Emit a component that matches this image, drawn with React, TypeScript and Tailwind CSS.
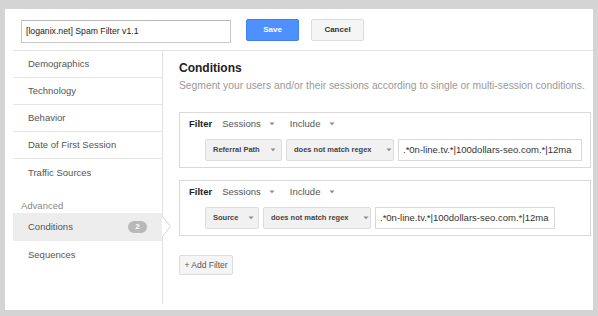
import React from "react";

const font = { fontFamily: '"Liberation Sans", Arial, sans-serif' };

function Caret() {
  return (
    <svg width="6" height="4" viewBox="0 0 6 4" className="shrink-0">
      <path d="M0.5 0.5 L5.5 0.5 L3 3.2 Z" fill="#8a8a8a" />
    </svg>
  );
}

function Pill({ label, w, pl, gap }: { label: string; w: string; pl: string; gap: string }) {
  return (
    <div
      className={`h-[22px] ${w} ${pl} ${gap} flex items-center bg-[#f1f1f1] border border-[#dcdcdc] rounded-[2px] text-[7.5px] font-bold text-[#444]`}
    >
      <span>{label}</span>
      <Caret />
    </div>
  );
}

function FilterBox({ first, inputW }: { first: React.ReactNode; inputW: string }) {
  return (
    <div className="border border-[#d9d9d9] pt-[4px] pb-[6px] pl-[9px]">
      <div className="h-[14px] flex items-center text-[9.5px] text-[#555]">
        <span className="font-bold text-[#222]">Filter</span>
        <span className="ml-[10px]">Sessions</span>
        <span className="ml-[8px]">
          <Caret />
        </span>
        <span className="ml-[15px]">Include</span>
        <span className="ml-[9px]">
          <Caret />
        </span>
      </div>
      <div className="mt-[8px] pl-[16px] flex gap-[4px]">
        {first}
        <Pill label="does not match regex" w="w-[108px]" pl="pl-[7px]" gap="gap-[14px]" />
        <div
          className={`h-[22px] ${inputW} border border-[#d9d9d9] pl-[4px] flex items-center text-[9.5px] text-[#333] whitespace-nowrap overflow-hidden`}
        >
          .*0n-line.tv.*|100dollars-seo.com.*|12ma
        </div>
      </div>
    </div>
  );
}

const navTop = ["Demographics", "Technology", "Behavior", "Date of First Session"];

export default function App() {
  return (
    <div
      style={font}
      className="w-[598px] h-[316px] bg-[#d4d4d4] pt-[9px] px-[5px] pb-[6px] overflow-hidden"
    >
      <div className="bg-white h-full overflow-hidden">
        <div className="h-[42px] ml-[8px] pl-[8px] border-b border-[#e2e2e2] flex items-start">
          <div className="mt-[11px] w-[210px] h-[23px] border border-[#c8c8c8] border-t-[#b9b9b9] pl-[4px] flex items-center text-[8.7px] text-[#222]">
            [loganix.net] Spam Filter v1.1
          </div>
          <button className="mt-[10px] ml-[15px] w-[53px] h-[22px] rounded-[2px] bg-[#4d90fe] border border-[#3c82f4] text-white text-[8px] font-bold">
            Save
          </button>
          <button className="mt-[10px] ml-[12px] w-[53px] h-[22px] rounded-[2px] bg-[#f5f5f5] border border-[#dcdcdc] text-[#333] text-[8px] font-bold">
            Cancel
          </button>
        </div>

        <div className="flex">
          <div className="ml-[8px] w-[150px] h-[253px] border-r border-[#e0e0e0] text-[9.5px] text-[#555]">
            {navTop.map((n) => (
              <div key={n} className="h-[27px] pt-[1px] border-b border-[#e6e6e6] pl-[15px] flex items-center">
                {n}
              </div>
            ))}
            <div className="h-[27px] pt-[1px] pl-[15px] flex items-center">Traffic Sources</div>
            <div className="mt-[14px] h-[13px] pl-[8px] flex items-center text-[#888]">Advanced</div>
            <div className="relative h-[28px] bg-[#ededed] pl-[15px] pr-[15px] flex items-center justify-between">
              <span>Conditions</span>
              <span className="w-[19px] h-[12px] rounded-full bg-[#b8b8b8] text-white text-[8px] font-bold flex items-center justify-center">
                2
              </span>
              <svg
                width="10"
                height="22"
                viewBox="0 0 10 22"
                className="absolute left-full top-[3px]"
              >
                <path d="M0 0 L8.5 10.5 L0 21 Z" fill="#fff" />
                <path d="M0 0 L8.5 10.5 L0 21" fill="none" stroke="#d2d2d2" />
              </svg>
            </div>
            <div className="h-[28px] pl-[15px] flex items-center">Sequences</div>
          </div>

          <div className="flex-1 pl-[16px] pr-[2px]">
            <div className="pt-[10px] h-[26px] flex items-end text-[12px] font-bold text-[#222]">
              Conditions
            </div>
            <div className="mt-[2px] text-[10.3px] leading-[14px] text-[#999] whitespace-nowrap">
              Segment your users and/or their sessions according to single or multi-session conditions.
            </div>
            <div className="mt-[19px]">
              <FilterBox
                first={<Pill label="Referral Path" w="w-[77px]" pl="pl-[7px]" gap="gap-[10px]" />}
                inputW="w-[184px]"
              />
            </div>
            <div className="mt-[12px]">
              <FilterBox
                first={<Pill label="Source" w="w-[54px]" pl="pl-[7px]" gap="gap-[10px]" />}
                inputW="w-[180px]"
              />
            </div>
            <button className="mt-[19px] w-[54px] h-[20px] rounded-[2px] bg-[#f5f5f5] border border-[#dcdcdc] text-[8.5px] text-[#555]">
              + Add Filter
            </button>
          </div>
        </div>
      </div>
    </div>
  );
}
